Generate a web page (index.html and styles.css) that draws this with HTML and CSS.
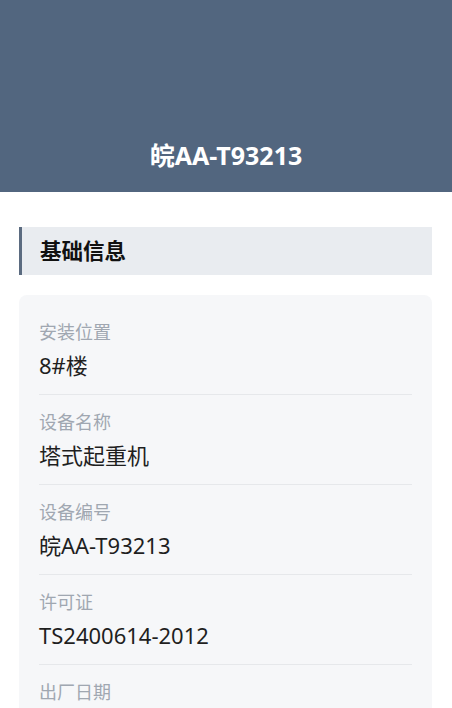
FILE: index.html
```html
<!DOCTYPE html>
<html lang="zh-CN">

<head>
    <meta charset="UTF-8">
    <meta name="viewport" content="width=device-width, initial-scale=1.0">
    <title>设备详情</title>
    <link rel="stylesheet" href="styles.css">
</head>

<body>
    <div class="header">
        <h1>皖AA-T93213</h1>
    </div>

    <div class="content">
        <div class="section-title">基础信息</div>

        <div class="card">
            <div class="item">
                <div class="label">安装位置</div>
                <div class="value">8#楼</div>
            </div>
            <div class="item">
                <div class="label">设备名称</div>
                <div class="value">塔式起重机</div>
            </div>
            <div class="item">
                <div class="label">设备编号</div>
                <div class="value">皖AA-T93213</div>
            </div>
            <div class="item">
                <div class="label">许可证</div>
                <div class="value">TS2400614-2012</div>
            </div>
            <div class="item">
                <div class="label">出厂日期</div>
                <div class="value">2012-06-14</div>
            </div>
        </div>
    </div>
</body>

</html>
```

FILE: styles.css
```css
body {
    font-family: "Noto Sans", "Noto Sans CJK SC", sans-serif;
    background-color: #ffffff;
    margin: 0;
    padding: 0;
    color: #1f1f1f;
}

.header {
    height: 192px;
    background-color: #52667f;
    display: flex;
    align-items: flex-end;
    justify-content: center;
}

.header h1 {
    margin: 0 0 20px;
    font-size: 25px;
    line-height: 34px;
    font-weight: bold;
    color: #ffffff;
}

.content {
    padding: 35px 20px 0 19px;
}

.section-title {
    height: 48px;
    line-height: 48px;
    background-color: #e9ecf0;
    border-left: 3px solid #5b6b80;
    padding-left: 18px;
    font-size: 21.5px;
    font-weight: bold;
    color: #111111;
}

.card {
    margin-top: 20px;
    background-color: #f6f7f9;
    border-radius: 8px;
    padding: 10px 20px 0;
}

.item {
    padding: 16px 0 15px;
    border-bottom: 1px solid #e6e8eb;
}

.label {
    font-size: 18px;
    line-height: 22px;
    color: #a0a7b1;
}

.value {
    margin-top: 8px;
    font-size: 22px;
    line-height: 28px;
    color: #1f1f1f;
}
```
